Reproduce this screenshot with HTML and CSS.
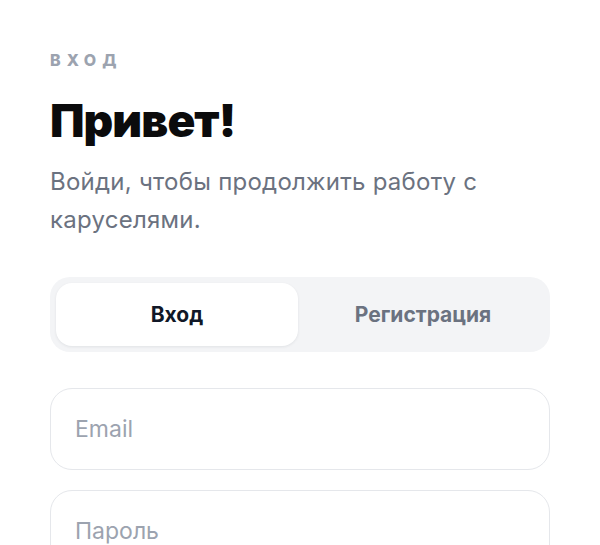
FILE: index.html
```html
<!DOCTYPE html>
<html lang="ru">
<head>
<meta charset="utf-8">
<title>Вход</title>
<link rel="stylesheet" href="styles.css">
</head>
<body>
<main class="auth">
  <div class="eyebrow">вход</div>
  <h1 class="title">Привет!</h1>
  <p class="subtitle">Войди, чтобы продолжить работу с каруселями.</p>
  <div class="tabs">
    <button class="tab tab-active" type="button">Вход</button>
    <button class="tab" type="button">Регистрация</button>
  </div>
  <form class="form">
    <input class="field" type="email" placeholder="Email">
    <input class="field" type="password" placeholder="Пароль">
  </form>
</main>
</body>
</html>
```

FILE: styles.css
```css
* { box-sizing: border-box; }
html, body {
  margin: 0;
  background: #ffffff;
  font-family: Inter, "Noto Sans", sans-serif;
  overflow: hidden;
}
.auth {
  padding: 50px 50px 0 50px;
  display: flex;
  flex-direction: column;
}
.eyebrow {
  font-size: 16px;
  line-height: 20px;
  font-weight: 800;
  text-transform: uppercase;
  letter-spacing: 6px;
  color: #9ca3af;
}
.title {
  margin: 24px 0 0 0;
  font-size: 46px;
  line-height: 52px;
  font-weight: 900;
  letter-spacing: -0.02em;
  color: #0b0b0c;
}
.subtitle {
  margin: 17px 0 0 0;
  font-size: 24px;
  line-height: 38px;
  letter-spacing: 0.25px;
  color: #6b7280;
}
.tabs {
  margin-top: 38px;
  display: grid;
  grid-template-columns: 1fr 1fr;
  gap: 4px;
  padding: 6px;
  background: #f3f4f6;
  border-radius: 20px;
}
.tab {
  height: 63px;
  border: 0;
  background: transparent;
  border-radius: 16px;
  font-family: inherit;
  font-size: 21px;
  font-weight: 700;
  color: #6b7280;
}
.tab-active {
  background: #ffffff;
  color: #111827;
  box-shadow: 0 1px 3px rgba(17, 24, 39, 0.08);
}
.form {
  margin-top: 36px;
  display: flex;
  flex-direction: column;
  gap: 20px;
}
.field {
  height: 82px;
  width: 100%;
  padding: 0 24px;
  border: 1.5px solid #e5e7eb;
  border-radius: 22px;
  font-family: inherit;
  font-size: 23px;
  color: #111827;
  background: #ffffff;
  outline: none;
}
.field::placeholder {
  color: #9ca3af;
}
```
